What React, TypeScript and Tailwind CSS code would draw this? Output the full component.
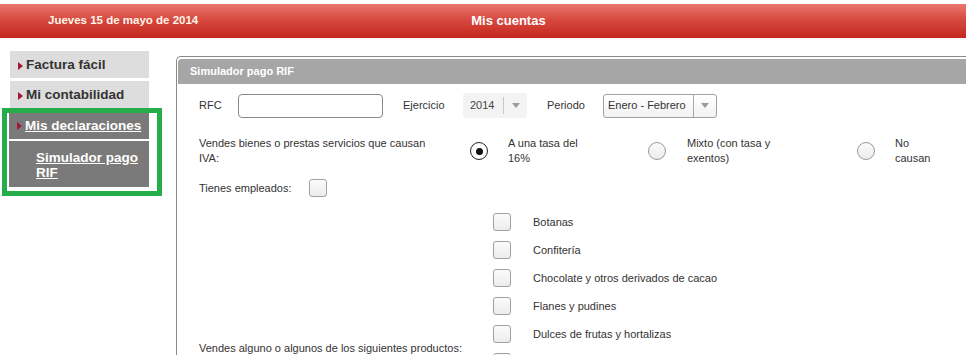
import React from 'react';

const products = [
  'Botanas',
  'Confitería',
  'Chocolate y otros derivados de cacao',
  'Flanes y pudines',
  'Dulces de frutas y hortalizas',
  'Cremas de cacahuate y avellanas',
  'Dulces de leche',
  'Alimentos preparados a base de cereales',
  'Helados, nieves y paletas de hielo',
  'Bebidas saborizadas',
];

function Arrow() {
  return (
    <svg width="5" height="8" viewBox="0 0 5 8" className="shrink-0">
      <path d="M0 0L5 4L0 8Z" fill="#a3173a" />
    </svg>
  );
}

function Caret() {
  return (
    <svg width="8" height="5" viewBox="0 0 8 5">
      <path d="M0 0H8L4 5Z" fill="#9a9a9a" />
    </svg>
  );
}

function Radio({ checked }: { checked?: boolean }) {
  if (checked) {
    return (
      <div className="w-[18px] h-[18px] rounded-full border-[1.5px] border-[#222] bg-white flex items-center justify-center">
        <div className="w-[7px] h-[7px] rounded-full bg-[#111]" />
      </div>
    );
  }
  return <div className="w-[18px] h-[18px] rounded-full border border-[#999] bg-gradient-to-b from-[#fbfbfb] to-[#ececec]" />;
}

function Checkbox() {
  return <div className="w-[18px] h-[18px] shrink-0 rounded-[3px] border border-[#a0a0a0] bg-gradient-to-b from-[#fbfbfb] to-[#ececec]" />;
}

export default function App() {
  return (
    <div className="w-[966px] h-[355px] overflow-hidden bg-white text-[#333]" style={{ fontFamily: '"Liberation Sans", Arial, sans-serif' }}>
      <div className="mt-[4px] h-[34px] flex items-center bg-[linear-gradient(to_bottom,#e8776f,#d6463c_50%,#c4271f)]">
        <span className="pl-[48px] text-[11.5px] font-bold text-[#fff6ea]">Jueves 15 de mayo de 2014</span>
        <span className="ml-[273px] text-[13px] font-bold text-white">Mis cuentas</span>
      </div>

      <div className="flex">
        <div className="w-[176px] shrink-0 pt-[13px] pl-[2px]">
          <div className="ml-[8px] w-[139px] h-[27px] pt-[2px] bg-[#dddddd] flex items-center gap-[3px] pl-[8px] text-[13.5px] font-bold">
            <Arrow />
            <span>Factura fácil</span>
          </div>
          <div className="ml-[8px] mt-[3px] w-[139px] h-[27px] pt-[2px] bg-[#dddddd] flex items-center gap-[3px] pl-[8px] text-[13.5px] font-bold">
            <Arrow />
            <span>Mi contabilidad</span>
          </div>
          <div className="w-[160px] border-[5px] border-[#25ad4a] pl-[2px] pb-[4px]">
            <div className="w-[140px] h-[26px] bg-[#7a7a7a] flex items-center gap-[3px] pl-[8px] text-[13.5px] font-bold text-white underline">
              <Arrow />
              <span>Mis declaraciones</span>
            </div>
            <div className="mt-[2px] w-[140px] h-[46px] bg-[#7a7a7a] pl-[27px] pt-[9px] text-[13.5px] leading-[15px] font-bold text-white underline">
              Simulador pago RIF
            </div>
          </div>
        </div>

        <div className="mt-[18px] w-[820px] shrink-0 h-[400px] border-l border-t border-[#8a8a8a] rounded-tl-[5px] pt-[2px] pl-[1px]">
          <div className="h-[25px] bg-[#a6a6a6] rounded-tl-[4px] flex items-center pl-[12px] text-[11px] font-bold text-white">
            Simulador pago RIF
          </div>

          <div className="pl-[21px] text-[11px]">
            <div className="mt-[9px] h-[25px] flex items-center">
              <span className="w-[39px]">RFC</span>
              <div className="w-[145px] h-[24px] rounded-[4px] border border-[#8a8a8a] bg-white" />
              <span className="ml-[20px] w-[60px]">Ejercicio</span>
              <div className="w-[64px] h-[25px] rounded-[3px] bg-[#f3f3f3] flex items-center text-[#444]">
                <span className="w-[40px] pl-[7px]">2014</span>
                <div className="w-px h-[17px] bg-[#c8c8c8]" />
                <div className="flex-1 flex justify-center"><Caret /></div>
              </div>
              <span className="ml-[20px] w-[56px]">Periodo</span>
              <div className="w-[114px] h-[24px] rounded-[3px] border border-[#a0a0a0] bg-gradient-to-b from-white to-[#f2f2f2] flex items-center">
                <span className="w-[89px] pl-[4px]">Enero - Febrero</span>
                <div className="w-px h-[22px] bg-[#a8a8a8]" />
                <div className="flex-1 flex justify-center"><Caret /></div>
              </div>
            </div>

            <div className="mt-[18px] grid grid-cols-[271px_38px_140px_39px_170px_38px_60px] items-center leading-[15px]">
              <span className="w-[240px]">Vendes bienes o prestas servicios que causan IVA:</span>
              <Radio checked />
              <span className="max-w-[80px]">A una tasa del 16%</span>
              <Radio />
              <span className="max-w-[95px]">Mixto (con tasa y exentos)</span>
              <Radio />
              <span className="w-[45px]">No causan</span>
            </div>

            <div className="mt-[12px] h-[20px] flex items-center">
              <span className="w-[110px]">Tienes empleados:</span>
              <Checkbox />
            </div>

            <div className="mt-[10px] grid grid-cols-[294px_1fr] items-center">
              <span>Vendes alguno o algunos de los siguientes productos:</span>
              <div className="flex flex-col">
                {products.map((p) => (
                  <div key={p} className="h-[28px] flex items-center gap-[22px]">
                    <Checkbox />
                    <span>{p}</span>
                  </div>
                ))}
              </div>
            </div>
          </div>
        </div>
      </div>
    </div>
  );
}
